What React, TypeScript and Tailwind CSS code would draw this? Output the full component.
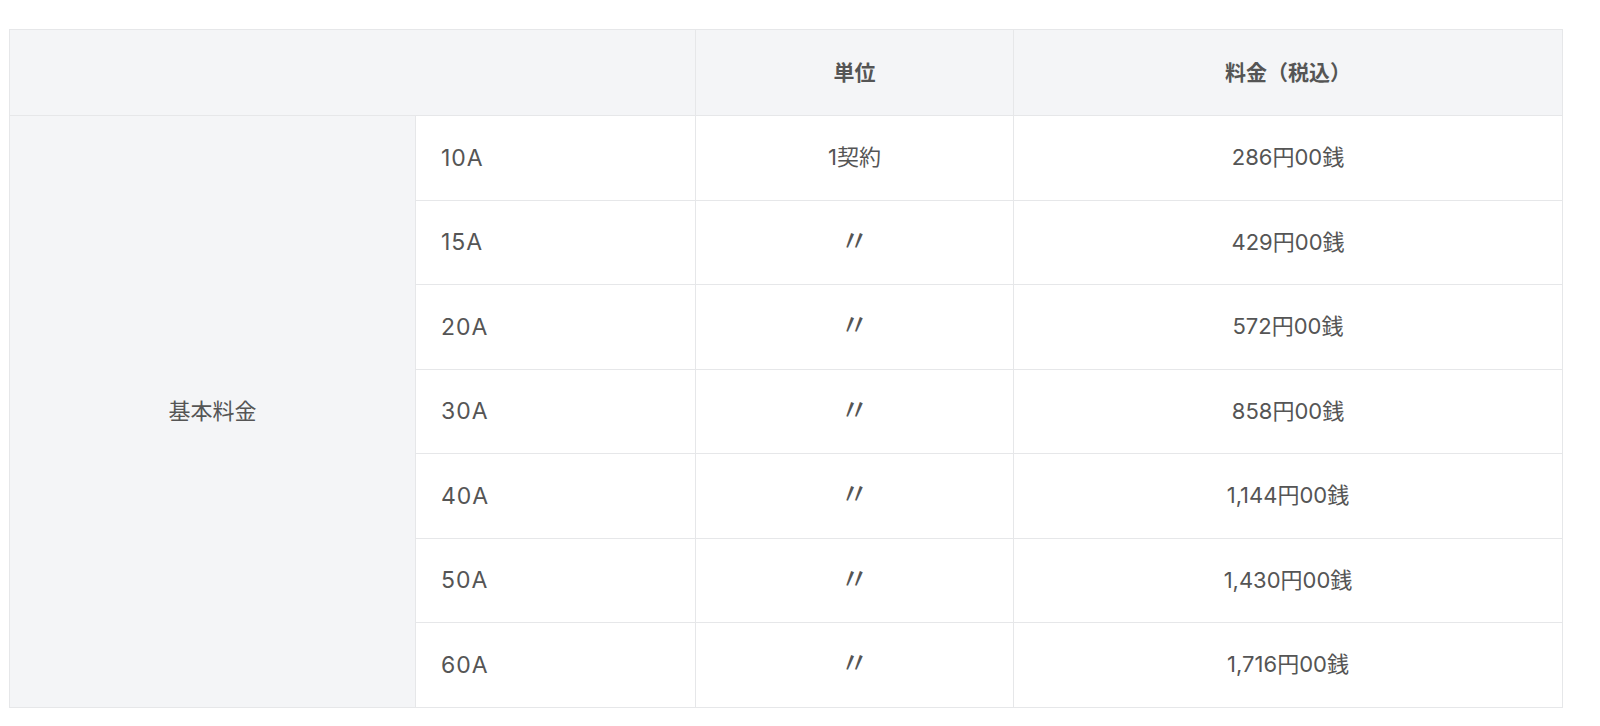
import React from "react";

const rows = [
  { a: "10A", u: "1契約", p: "286円00銭" },
  { a: "15A", u: "〃", p: "429円00銭" },
  { a: "20A", u: "〃", p: "572円00銭" },
  { a: "30A", u: "〃", p: "858円00銭" },
  { a: "40A", u: "〃", p: "1,144円00銭" },
  { a: "50A", u: "〃", p: "1,430円00銭" },
  { a: "60A", u: "〃", p: "1,716円00銭" },
];

export default function App() {
  return (
    <div
      className="min-h-[726px] w-[1600px] bg-white pt-[29px] pl-[9px]"
      style={{ fontFamily: 'Inter, "Noto Sans CJK JP", sans-serif' }}
    >
      <table className="w-[1553px] table-fixed border-collapse border border-[#e6e7e9] text-[22px] text-[#555555]">
        <colgroup>
          <col className="w-[406px]" />
          <col className="w-[280px]" />
          <col className="w-[318px]" />
          <col className="w-[549px]" />
        </colgroup>
        <thead>
          <tr className="h-[86px] bg-[#f4f5f7]">
            <th colSpan={2} className="border border-[#e6e7e9]"></th>
            <th className="border border-[#e6e7e9] text-center font-bold text-[21px]">単位</th>
            <th className="border border-[#e6e7e9] text-center font-bold text-[21px]">料金（税込）</th>
          </tr>
        </thead>
        <tbody>
          {rows.map((r, i) => (
            <tr key={r.a} className="h-[84.5px]">
              {i === 0 && (
                <td rowSpan={7} className="border border-[#e6e7e9] bg-[#f4f5f7] text-center align-middle">
                  基本料金
                </td>
              )}
              <td className="border border-[#e6e7e9] bg-white pl-[25px] text-left align-middle tracking-[1px] text-[23px]">{r.a}</td>
              <td className="border border-[#e6e7e9] bg-white text-center align-middle">
                {r.u === "〃" ? <span className="text-[30px] leading-none">〃</span> : r.u}
              </td>
              <td className="border border-[#e6e7e9] bg-white text-center align-middle">{r.p}</td>
            </tr>
          ))}
        </tbody>
      </table>
    </div>
  );
}
